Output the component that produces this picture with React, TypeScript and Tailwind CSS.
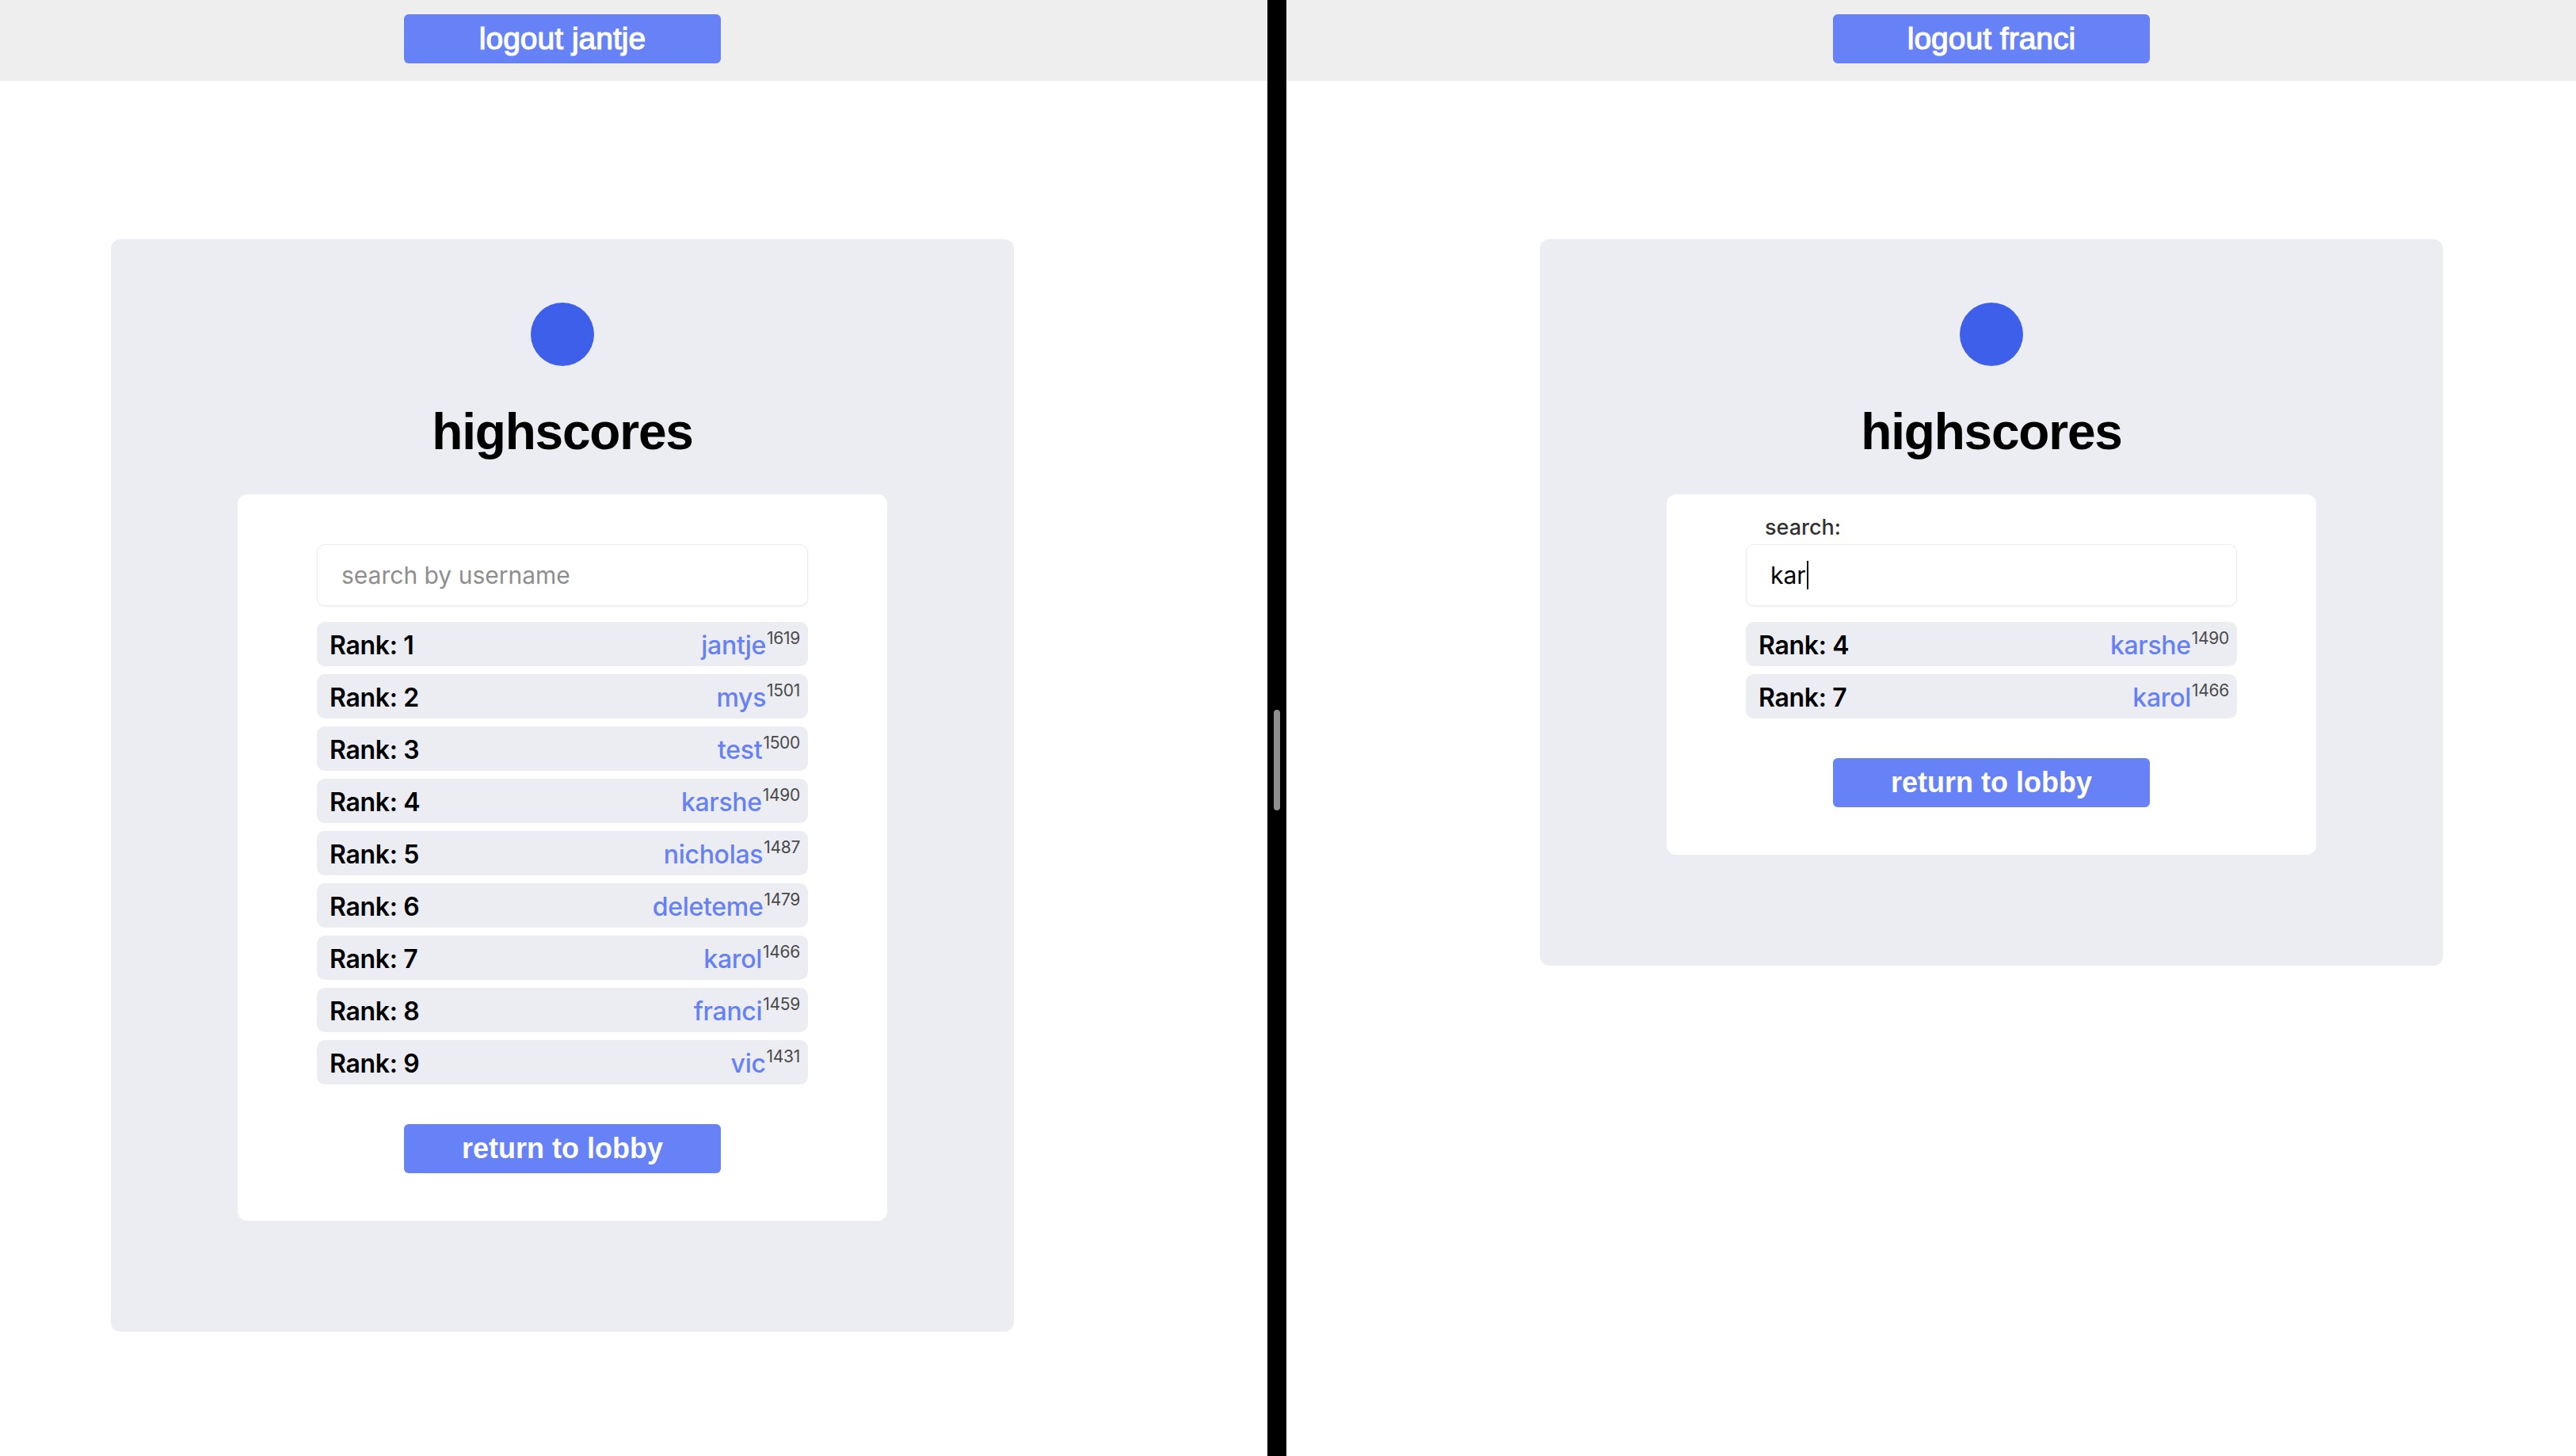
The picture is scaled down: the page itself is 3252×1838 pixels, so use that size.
import React from "react";

type Score = { rank: number; name: string; elo: number };

const ALL: Score[] = [
  { rank: 1, name: "jantje", elo: 1619 },
  { rank: 2, name: "mys", elo: 1501 },
  { rank: 3, name: "test", elo: 1500 },
  { rank: 4, name: "karshe", elo: 1490 },
  { rank: 5, name: "nicholas", elo: 1487 },
  { rank: 6, name: "deleteme", elo: 1479 },
  { rank: 7, name: "karol", elo: 1466 },
  { rank: 8, name: "franci", elo: 1459 },
  { rank: 9, name: "vic", elo: 1431 },
];

function ScoreRow({ s }: { s: Score }) {
  return (
    <div className="flex h-[56px] items-center justify-between rounded-[10px] bg-[#ecedf2] pl-[16px] pr-[10px] pt-[4px] font-['Inter',sans-serif]">
      <span className="text-[32px] font-semibold tracking-[-0.3px] text-black">Rank: {s.rank}</span>
      <span className="text-[32px] font-medium tracking-[-0.3px] text-[#6680f5]">
        {s.name}
        <sup className="relative top-[-1px] ml-[1px] align-super text-[21px] font-normal text-[#4a4a4a]">{s.elo}</sup>
      </span>
    </div>
  );
}

function Pane({ user, query, offset }: { user: string; query: string; offset: string }) {
  const list = query ? ALL.filter((s) => s.name.startsWith(query)) : ALL;

  return (
    <div className="flex flex-1 flex-col bg-white">
      <div className={`h-[102px] bg-[#eeeeee] ${offset}`}>
        <div className="flex w-[1140px] justify-center pt-[18px]">
          <button className="h-[62px] w-[400px] rounded-[6px] bg-[#6781f6] font-['Liberation_Sans',Arial,sans-serif] text-[39px] text-white [-webkit-text-stroke:1.2px_white]">
            logout {user}
          </button>
        </div>
      </div>

      <div className={`pt-[200px] ${offset}`}>
        <div className="flex w-[1140px] flex-col items-center rounded-[12px] bg-[#ecedf2] pt-[80px] pb-[140px]">
          <div className="h-[80px] w-[80px] rounded-full bg-[#3e5fe9]" />
          <h1 className="mt-[46px] font-['Liberation_Sans',Arial,sans-serif] text-[64px] leading-[74px] font-bold tracking-[-1.2px] text-black">
            highscores
          </h1>

          <div className="mt-[42px] flex w-[820px] flex-col rounded-[12px] bg-white px-[100px] pt-[24px] pb-[60px]">
            <label
              className={`pl-[24px] font-['Inter',sans-serif] text-[27px] leading-[36px] font-medium text-[#333] ${query ? "" : "invisible"}`}
            >
              search:
            </label>
            <div className="mt-[3px] flex h-[78px] items-center rounded-[10px] border border-[#ececec] bg-white pl-[30px] font-['Inter',sans-serif] text-[30px] shadow-[0_1px_3px_rgba(0,0,0,0.06)]">
              {query ? (
                <>
                  <span className="text-black">{query}</span>
                  <span className="ml-[1px] h-[36px] w-[2px] bg-black" />
                </>
              ) : (
                <span className="text-[#8e8e8e]">search by username</span>
              )}
            </div>

            <div className="mt-[20px] flex flex-col gap-[10px]">
              {list.map((s) => (
                <ScoreRow key={s.rank} s={s} />
              ))}
            </div>

            <div className="mt-[50px] flex justify-center">
              <button className="h-[62px] w-[400px] rounded-[6px] bg-[#6781f6] font-['Liberation_Sans',Arial,sans-serif] text-[36px] font-bold text-white">
                return to lobby
              </button>
            </div>
          </div>
        </div>
      </div>
    </div>
  );
}

export default function App() {
  return (
    <div className="flex h-[1838px] w-[3252px] overflow-hidden">
      <div className="flex w-[1600px]">
        <Pane user="jantje" query="" offset="pl-[140px]" />
      </div>
      <div className="flex w-[24px] flex-col items-center bg-black pt-[896px]">
        <div className="h-[127px] w-[8px] rounded-full bg-[#8e8e8e]" />
      </div>
      <div className="flex flex-1">
        <Pane user="franci" query="kar" offset="pl-[320px]" />
      </div>
    </div>
  );
}
